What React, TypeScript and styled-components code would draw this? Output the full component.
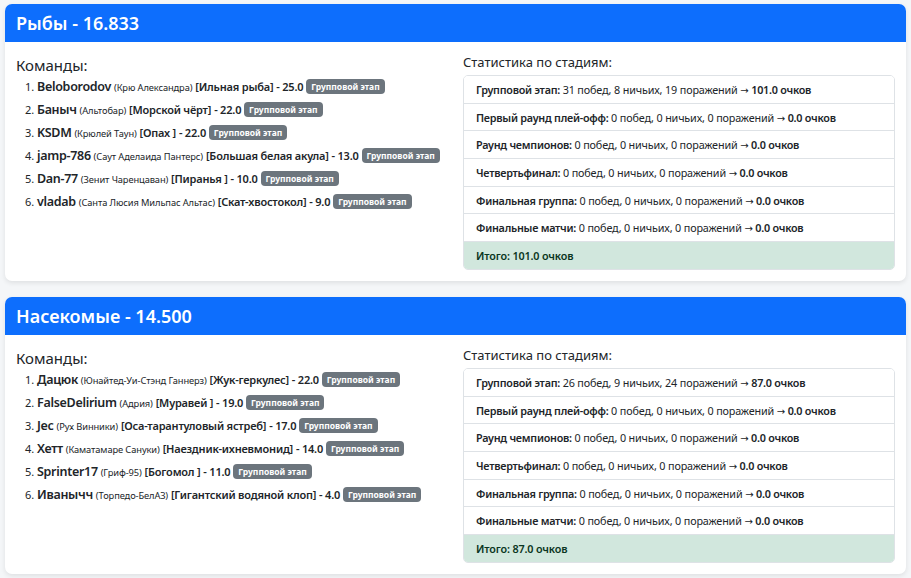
import * as React from "react";
import styled, { createGlobalStyle } from "styled-components";

const GlobalStyle = createGlobalStyle`
  * { box-sizing: border-box; }
  body {
    margin: 0;
    background: #f4f6f8;
    color: #212529;
    font-family: "Noto Sans", "Open Sans", sans-serif;
    font-size: 12px;
  }
  strong { font-weight: 600; }
`;

const Page = styled.div`
  padding: 4px 5px 0;
`;

const Card = styled.section`
  background: #fff;
  border-radius: 7px;
  box-shadow: 0 2px 5px rgba(0, 0, 0, 0.09);
  margin-bottom: 16px;
  overflow: hidden;
`;

const Header = styled.h4`
  margin: 0;
  background: #0d6efd;
  color: #fff;
  font-size: 18px;
  font-weight: 600;
  line-height: 22px;
  padding: 8px 11px;
`;

const Body = styled.div`
  display: grid;
  grid-template-columns: minmax(0, 1fr) minmax(0, 1fr);
  column-gap: 15px;
  padding: 12px 11px 11px;
`;

const TeamsTitle = styled.h5`
  margin: 2px 0 3px;
  font-size: 15px;
  font-weight: 400;
  line-height: 18px;
`;

const StatsTitle = styled.h6`
  margin: 0 0 4px;
  font-size: 13px;
  font-weight: 400;
  line-height: 17px;
`;

const Teams = styled.ol`
  margin: 0;
  padding-left: 21px;
`;

const Team = styled.li`
  line-height: 19px;
  height: 19px;
  margin-bottom: 4px;
  font-size: 11px;
  white-space: nowrap;
`;

const Player = styled.strong`
  font-size: 12.5px;
  letter-spacing: -0.3px;
`;

const Club = styled.small`
  font-size: 9.3px;
  letter-spacing: -0.1px;
`;

const Animal = styled.strong`
  font-size: 11px;
  letter-spacing: -0.2px;
`;

const Badge = styled.span`
  display: inline-block;
  background: #6c757d;
  color: #fff;
  font-size: 8.5px;
  font-weight: 700;
  line-height: 11px;
  padding: 2px 5px;
  border-radius: 4px;
  vertical-align: 1px;
`;

const StatList = styled.ul`
  margin: 0;
  padding: 0;
  list-style: none;
  border: 1px solid #dee2e6;
  border-radius: 5px;
  overflow: hidden;
`;

const StatRow = styled.li<{ $total?: boolean }>`
  font-size: 10.8px;
  line-height: 17px;
  height: 27.7px;
  padding: 5px 12px;
  border-top: 1px solid #dee2e6;
  white-space: nowrap;
  letter-spacing: -0.15px;
  background: ${p => (p.$total ? "#d1e7dd" : "#fff")};
  color: ${p => (p.$total ? "#0a3622" : "#212529")};
  font-weight: ${p => (p.$total ? 600 : 400)};
  &:first-child { border-top: 0; height: 26.7px; }
  strong { letter-spacing: -0.25px; }
`;

const Arrow = styled.span`
  font-family: "DejaVu Sans", sans-serif;
  font-size: 10px;
  line-height: 1;
`;

type TeamRow = { player: string; club: string; animal: string; pts: string };
type Stage = { name: string; w: number; d: number; l: number; pts: string };

const stageNames = [
  "Групповой этап",
  "Первый раунд плей-офф",
  "Раунд чемпионов",
  "Четвертьфинал",
  "Финальная группа",
  "Финальные матчи",
];

const makeStages = (w: number, d: number, l: number, pts: string): Stage[] =>
  stageNames.map((name, i) =>
    i === 0 ? { name, w, d, l, pts } : { name, w: 0, d: 0, l: 0, pts: "0.0" }
  );

const groups = [
  {
    title: "Рыбы - 16.833",
    total: "101.0",
    teams: [
      { player: "Beloborodov", club: "Крю Александра", animal: "Ильная рыба", pts: "25.0" },
      { player: "Баныч", club: "Альтобар", animal: "Морской чёрт", pts: "22.0" },
      { player: "KSDM", club: "Крюлей Таун", animal: "Опах ", pts: "22.0" },
      { player: "jamp-786", club: "Саут Аделаида Пантерс", animal: "Большая белая акула", pts: "13.0" },
      { player: "Dan-77", club: "Зенит Чаренцаван", animal: "Пиранья ", pts: "10.0" },
      { player: "vladab", club: "Санта Люсия Мильпас Альтас", animal: "Скат-хвостокол", pts: "9.0" },
    ] as TeamRow[],
    stages: makeStages(31, 8, 19, "101.0"),
  },
  {
    title: "Насекомые - 14.500",
    total: "87.0",
    teams: [
      { player: "Дацюк", club: "Юнайтед-Уи-Стэнд Ганнерз", animal: "Жук-геркулес", pts: "22.0" },
      { player: "FalseDelirium", club: "Адрия", animal: "Муравей ", pts: "19.0" },
      { player: "Jec", club: "Рух Винники", animal: "Оса-тарантуловый ястреб", pts: "17.0" },
      { player: "Хетт", club: "Каматамаре Сануки", animal: "Наездник-ихневмонид", pts: "14.0" },
      { player: "Sprinter17", club: "Гриф-95", animal: "Богомол ", pts: "11.0" },
      { player: "Иванычч", club: "Торпедо-БелАЗ", animal: "Гигантский водяной клоп", pts: "4.0" },
    ] as TeamRow[],
    stages: makeStages(26, 9, 24, "87.0"),
  },
];

export default function App() {
  return (
    <Page>
      <GlobalStyle />
      {groups.map(g => (
        <Card key={g.title}>
          <Header>{g.title}</Header>
          <Body>
            <div>
              <TeamsTitle>Команды:</TeamsTitle>
              <Teams>
                {g.teams.map(t => (
                  <Team key={t.player}>
                    <Player>{t.player}</Player> <Club>({t.club})</Club>{" "}
                    <Animal>[{t.animal}]</Animal> <Animal>- {t.pts}</Animal>{" "}
                    <Badge>Групповой этап</Badge>
                  </Team>
                ))}
              </Teams>
            </div>
            <div>
              <StatsTitle>Статистика по стадиям:</StatsTitle>
              <StatList>
                {g.stages.map(s => (
                  <StatRow key={s.name}>
                    <strong>{s.name}:</strong> {s.w} побед, {s.d} ничьих, {s.l} поражений{" "}
                    <Arrow>→</Arrow> <strong>{s.pts} очков</strong>
                  </StatRow>
                ))}
                <StatRow $total>Итого: {g.total} очков</StatRow>
              </StatList>
            </div>
          </Body>
        </Card>
      ))}
    </Page>
  );
}
